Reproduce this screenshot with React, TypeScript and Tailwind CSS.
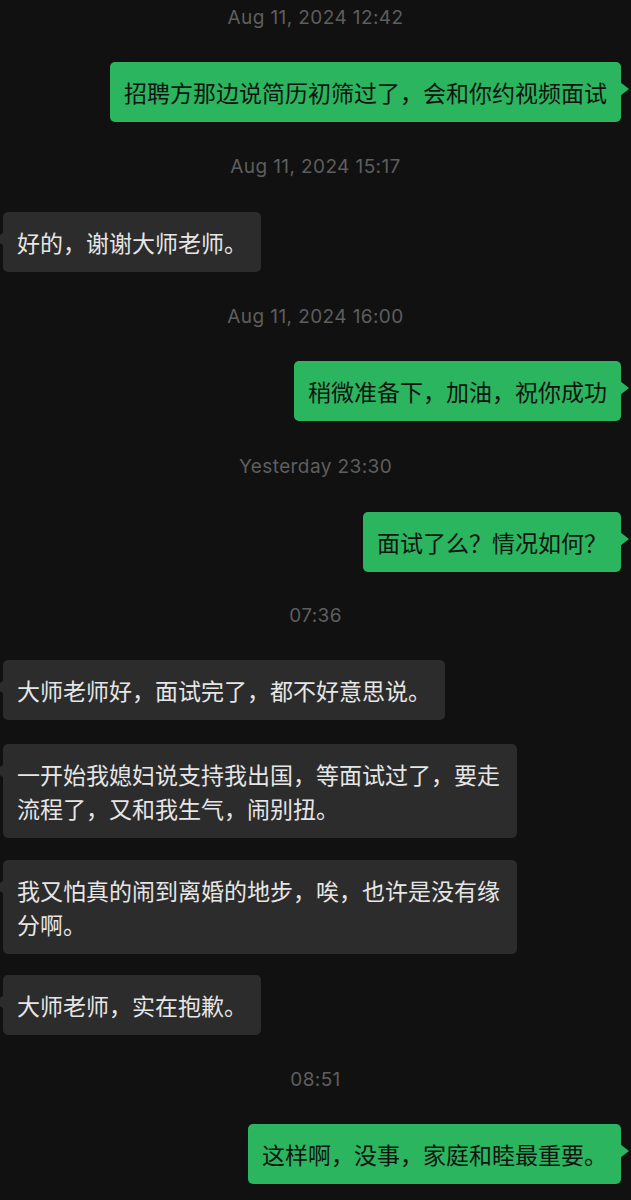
import React from "react";

type Item =
  | { kind: "ts"; text: string; mt: number }
  | { kind: "me" | "them"; text: string; mt: number };

const items: Item[] = [
  { kind: "ts", text: "Aug 11, 2024 12:42", mt: 6 },
  { kind: "me", text: "招聘方那边说简历初筛过了，会和你约视频面试", mt: 32 },
  { kind: "ts", text: "Aug 11, 2024 15:17", mt: 33 },
  { kind: "them", text: "好的，谢谢大师老师。", mt: 33 },
  { kind: "ts", text: "Aug 11, 2024 16:00", mt: 33 },
  { kind: "me", text: "稍微准备下，加油，祝你成功", mt: 32 },
  { kind: "ts", text: "Yesterday 23:30", mt: 34 },
  { kind: "me", text: "面试了么？情况如何？", mt: 33 },
  { kind: "ts", text: "07:36", mt: 32 },
  { kind: "them", text: "大师老师好，面试完了，都不好意思说。", mt: 32 },
  { kind: "them", text: "一开始我媳妇说支持我出国，等面试过了，要走流程了，又和我生气，闹别扭。", mt: 24 },
  { kind: "them", text: "我又怕真的闹到离婚的地步，唉，也许是没有缘分啊。", mt: 22 },
  { kind: "them", text: "大师老师，实在抱歉。", mt: 21 },
  { kind: "ts", text: "08:51", mt: 33 },
  { kind: "me", text: "这样啊，没事，家庭和睦最重要。", mt: 32 },
];

const cjk = { fontFamily: '"Noto Sans CJK SC", "Noto Sans", sans-serif' };

function Stamp({ text, mt }: { text: string; mt: number }) {
  return (
    <div
      className="flex h-[24px] items-center justify-center text-[19px] leading-[24px] tracking-[0.4px] text-[#5e5e5e]"
      style={{ marginTop: mt, fontFamily: 'Inter, "Liberation Sans", sans-serif' }}
    >
      {text}
    </div>
  );
}

function Bubble({ mine, text, mt }: { mine: boolean; text: string; mt: number }) {
  return (
    <div
      className={mine ? "flex justify-end pr-[10px]" : "flex justify-start pl-[3px]"}
      style={{ marginTop: mt }}
    >
      <div
        className={
          mine
            ? "relative max-w-[514px] rounded-[5px] bg-[#2bb55f] px-[14px] py-[13px] text-[23px] leading-[34px] text-[#0f1410]"
            : "relative max-w-[514px] rounded-[5px] bg-[#2c2c2c] px-[14px] py-[13px] text-[23px] leading-[34px] text-[#e6e6e6]"
        }
        style={cjk}
      >
        {text}
        {mine ? (
          <span className="absolute right-[-8px] top-[20px] h-0 w-0 border-y-[7px] border-l-[9px] border-y-transparent border-l-[#2bb55f]" />
        ) : (
          <span className="absolute left-[-8px] top-[20px] h-0 w-0 border-y-[7px] border-r-[9px] border-y-transparent border-r-[#2c2c2c]" />
        )}
      </div>
    </div>
  );
}

export default function App() {
  return (
    <div className="h-[1200px] w-full overflow-hidden bg-[#111111]">
      {items.map((it, i) =>
        it.kind === "ts" ? (
          <Stamp key={i} text={it.text} mt={it.mt} />
        ) : (
          <Bubble key={i} mine={it.kind === "me"} text={it.text} mt={it.mt} />
        )
      )}
    </div>
  );
}
